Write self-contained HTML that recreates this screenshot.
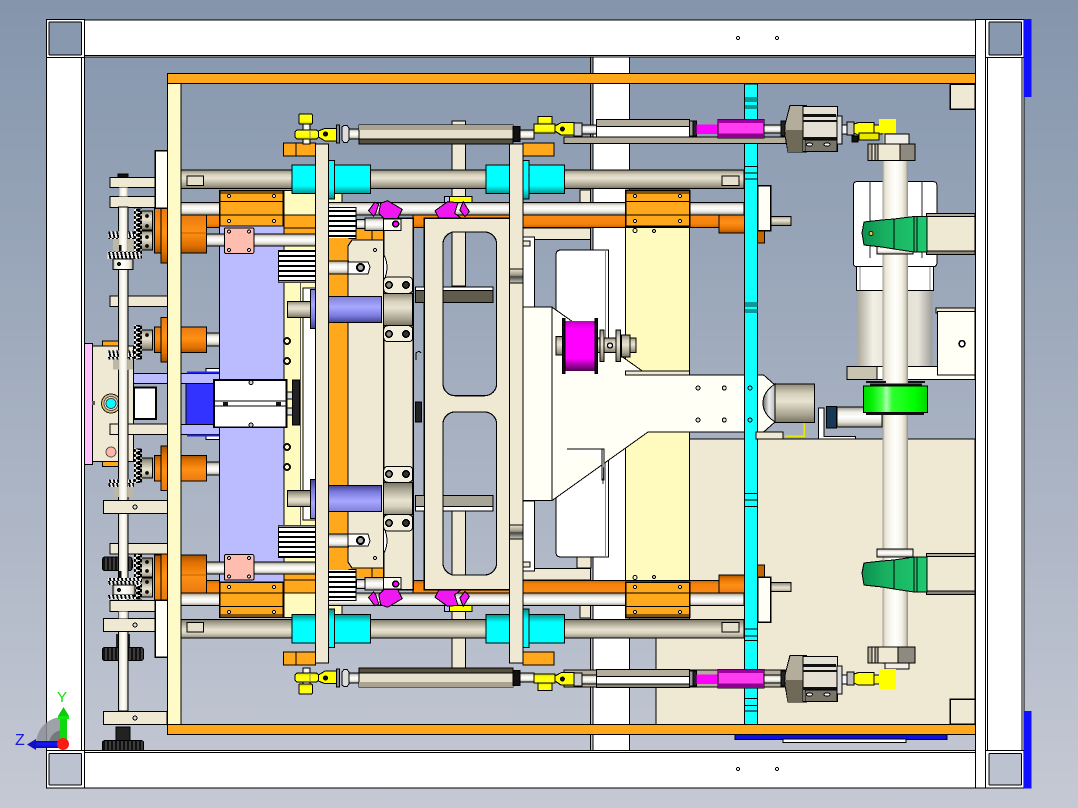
<!DOCTYPE html>
<html><head><meta charset="utf-8"><style>html,body{margin:0;padding:0;width:1078px;height:808px;overflow:hidden}svg{display:block}</style></head><body>
<svg xmlns="http://www.w3.org/2000/svg" width="1078" height="808" viewBox="0 0 1078 808" stroke="#000" stroke-width="1" shape-rendering="crispEdges">
<defs>
<linearGradient id="bg" x1="0" y1="0" x2="0" y2="1"><stop offset="0" stop-color="#8495ac"/><stop offset="1" stop-color="#c5c9d4"/></linearGradient>
<linearGradient id="tan" x1="0" y1="0" x2="0" y2="1"><stop offset="0" stop-color="#8f8a78"/><stop offset=".25" stop-color="#d6d0bd"/><stop offset=".45" stop-color="#e8e2d0"/><stop offset=".8" stop-color="#a8a290"/><stop offset="1" stop-color="#77725f"/></linearGradient>
<linearGradient id="wr" x1="0" y1="0" x2="0" y2="1"><stop offset="0" stop-color="#99968c"/><stop offset=".25" stop-color="#f0eee6"/><stop offset=".5" stop-color="#fff"/><stop offset=".75" stop-color="#e6e3d8"/><stop offset="1" stop-color="#8e8b80"/></linearGradient>
<linearGradient id="vr" x1="0" y1="0" x2="1" y2="0"><stop offset="0" stop-color="#9a958a"/><stop offset=".1" stop-color="#e6e3d6"/><stop offset=".3" stop-color="#f8f6ec"/><stop offset=".5" stop-color="#fffffc"/><stop offset=".75" stop-color="#f4f1e6"/><stop offset=".9" stop-color="#d6d2c4"/><stop offset="1" stop-color="#8f8a7c"/></linearGradient>
<linearGradient id="mot" x1="0" y1="0" x2="1" y2="0"><stop offset="0" stop-color="#aeaa9c"/><stop offset=".2" stop-color="#f2f0e6"/><stop offset=".5" stop-color="#dedbcf"/><stop offset=".8" stop-color="#e8e6dc"/><stop offset="1" stop-color="#9c9c98"/></linearGradient>
<linearGradient id="cy" x1="0" y1="0" x2="0" y2="1"><stop offset="0" stop-color="#0ff"/><stop offset=".72" stop-color="#0ff"/><stop offset="1" stop-color="#0a8f8c"/></linearGradient>
<linearGradient id="or" x1="0" y1="0" x2="0" y2="1"><stop offset="0" stop-color="#e87a10"/><stop offset=".45" stop-color="#ff9015"/><stop offset=".8" stop-color="#e07000"/><stop offset="1" stop-color="#a35200"/></linearGradient>
<linearGradient id="ro" x1="0" y1="0" x2="0" y2="1"><stop offset="0" stop-color="#f98a12"/><stop offset=".7" stop-color="#f5820c"/><stop offset="1" stop-color="#c56500"/></linearGradient>
<linearGradient id="pu" x1="0" y1="0" x2="0" y2="1"><stop offset="0" stop-color="#8080d8"/><stop offset=".4" stop-color="#a8a8ff"/><stop offset=".75" stop-color="#7b7be0"/><stop offset="1" stop-color="#44448f"/></linearGradient>
<linearGradient id="mg" x1="0" y1="0" x2="0" y2="1"><stop offset="0" stop-color="#c000c0"/><stop offset=".15" stop-color="#f0f"/><stop offset=".75" stop-color="#f0f"/><stop offset="1" stop-color="#500050"/></linearGradient>
<linearGradient id="gr" x1="0" y1="0" x2="1" y2="0"><stop offset="0" stop-color="#00d800"/><stop offset=".12" stop-color="#00f000"/><stop offset=".3" stop-color="#50ff50"/><stop offset=".36" stop-color="#b0ffb0"/><stop offset=".45" stop-color="#30ff30"/><stop offset=".8" stop-color="#00ff00"/><stop offset="1" stop-color="#00d800"/></linearGradient>
<linearGradient id="cone" x1="0" y1="0" x2="1" y2="0"><stop offset="0" stop-color="#0c9050"/><stop offset=".35" stop-color="#17b060"/><stop offset="1" stop-color="#20c870"/></linearGradient>
<linearGradient id="bl" x1="0" y1="0" x2="0" y2="1"><stop offset="0" stop-color="#0a0aa0"/><stop offset=".4" stop-color="#1818ff"/><stop offset="1" stop-color="#0808b0"/></linearGradient>
<linearGradient id="dome" x1="0" y1="0" x2="1" y2="0"><stop offset="0" stop-color="#666"/><stop offset=".5" stop-color="#eee"/><stop offset="1" stop-color="#bbb"/></linearGradient>
<linearGradient id="band" x1="0" y1="0" x2="0" y2="1"><stop offset="0" stop-color="#efe8d2"/><stop offset=".45" stop-color="#9a9582"/><stop offset=".55" stop-color="#444"/><stop offset="1" stop-color="#d4cdb8"/></linearGradient>
<linearGradient id="ylw" x1="0" y1="0" x2="0" y2="1"><stop offset="0" stop-color="#ffff20"/><stop offset=".7" stop-color="#ff0"/><stop offset="1" stop-color="#c8c800"/></linearGradient>
<pattern id="stripe" width="4" height="5" patternUnits="userSpaceOnUse"><rect width="4" height="5" fill="#fff" stroke="none"/><rect y="0" width="4" height="2" fill="#000" stroke="none"/></pattern>
<pattern id="gear" width="8" height="5" patternUnits="userSpaceOnUse"><rect width="8" height="5" fill="#eee" stroke="none"/><path d="M0 0L8 2.5L0 5" stroke="#000" stroke-width="2" fill="none"/></pattern>
<pattern id="gv" width="4" height="7" patternUnits="userSpaceOnUse"><rect width="4" height="7" fill="#eee" stroke="none"/><path d="M1 0L2.5 7" stroke="#000" stroke-width="1.8" fill="none"/></pattern>
<pattern id="kn" width="4" height="5" patternUnits="userSpaceOnUse"><rect width="4" height="5" fill="#111" stroke="none"/><path d="M2 0V5" stroke="#666" stroke-width="1" fill="none"/></pattern>

<g id="M0">
<rect x="580" y="190" width="10.7" height="13" fill="#efe8d2"/>
<rect x="181" y="170" width="563" height="18.7" fill="url(#tan)"/>
<rect x="187" y="176" width="16.5" height="9.7" fill="#e5dfcb"/>
<rect x="722" y="176" width="17" height="9.7" fill="#e5dfcb"/>
<rect x="444.4" y="196.7" width="5" height="7" fill="#bbf"/>
<rect x="449.4" y="196.7" width="22.4" height="6" fill="#ff0"/>
<rect x="413" y="215" width="306" height="12.7" fill="url(#ro)"/>
<rect x="206.6" y="215" width="13" height="12.7" fill="url(#ro)"/>
<rect x="181" y="202.3" width="563" height="12.7" fill="url(#wr)"/>
<rect x="719" y="215" width="25.6" height="18" fill="url(#or)"/>
<rect x="757.7" y="230.7" width="7" height="12.3" fill="#c66500"/>
<rect x="757.7" y="185.7" width="12.8" height="45" fill="#fffff5" stroke-width="1.5"/>
<rect x="771" y="216.3" width="19.8" height="9.4" fill="url(#tan)"/>
<rect x="219.7" y="190.7" width="63.3" height="35.3" fill="#ffa81c" stroke-width="1.5"/>
<path d="M219.7 201.7H283M219.7 215H283M219.7 193H283" fill="none"/>
<circle cx="229" cy="196" r="1.6" fill="#ddd"/><circle cx="274" cy="196" r="1.6" fill="#ddd"/>
<circle cx="229" cy="221" r="1.6" fill="#ddd"/><circle cx="274" cy="221" r="1.6" fill="#ddd"/>
<rect x="625.5" y="190.7" width="64" height="35.3" fill="#ffa81c" stroke-width="1.5"/>
<path d="M625.5 201.7H689.5M625.5 215H689.5M625.5 193H689.5" fill="none"/>
<circle cx="635" cy="196" r="1.6" fill="#ddd"/><circle cx="680" cy="196" r="1.6" fill="#ddd"/>
<circle cx="635" cy="221" r="1.6" fill="#ddd"/><circle cx="680" cy="221" r="1.6" fill="#ddd"/>
<circle cx="635" cy="230.5" r="2" fill="#fffbbe"/><circle cx="654" cy="231" r="1.4" fill="#fffbbe"/>
<rect x="181" y="215" width="25.6" height="38" fill="url(#or)"/>
<path d="M181 233H206.6" stroke="#c06000" fill="none"/>
<rect x="154.3" y="208" width="7" height="45" fill="url(#or)"/>
<rect x="161" y="208" width="7" height="55" fill="url(#or)"/>
<rect x="155" y="150.7" width="12.7" height="57.3" fill="#fffff5" stroke-width="1.5"/>
<rect x="110" y="177.7" width="45" height="10" fill="#efe8d2"/>
<rect x="110" y="196.7" width="45" height="10.6" fill="#efe8d2"/>
<rect x="141" y="211" width="11.6" height="19" fill="url(#tan)"/>
<rect x="141" y="231" width="11.6" height="19" fill="url(#tan)"/>
<circle cx="147" cy="216" r="1.3" fill="#222"/><circle cx="147" cy="226" r="1.3" fill="#222"/><circle cx="147" cy="237" r="1.3" fill="#222"/><circle cx="147" cy="246" r="1.3" fill="#222"/>
<rect x="134" y="208.3" width="8" height="50" fill="url(#gear)" stroke="none"/>
<rect x="206.6" y="333" width="13" height="13" fill="url(#wr)"/>
<rect x="181" y="327" width="25.6" height="25.7" fill="url(#or)"/>
<rect x="154.3" y="327" width="7" height="25.7" fill="url(#or)"/>
<rect x="161" y="317.3" width="7" height="44.7" fill="url(#or)"/>
<rect x="141" y="330" width="11.6" height="20" fill="url(#tan)"/>
<circle cx="147" cy="335" r="1.3" fill="#222"/>
<rect x="134" y="325" width="8" height="34.3" fill="url(#gear)" stroke="none"/>
<rect x="110" y="296" width="58" height="10.7" fill="#efe8d2"/>
<rect x="132" y="373.3" width="88" height="10" fill="#bbf"/>
<rect x="206" y="368.7" width="14" height="4.6" fill="#fff"/>
<rect x="187" y="371.7" width="33" height="2" fill="#2222ee" stroke="none"/>
</g>

<g id="M1">
<rect x="206.6" y="234" width="108.9" height="12" fill="url(#wr)"/>
<rect x="224.5" y="228" width="29.3" height="25.3" fill="#ffbdb0" rx="1"/>
<circle cx="229" cy="231.5" r="1.5" fill="#ddd"/><circle cx="249" cy="231.5" r="1.5" fill="#ddd"/><circle cx="229" cy="250" r="1.5" fill="#ddd"/><circle cx="249" cy="250" r="1.5" fill="#ddd"/>
<rect x="278.3" y="250.7" width="37.2" height="32" fill="url(#stripe)"/>
<rect x="278.3" y="281" width="37.2" height="1.7" fill="#888" stroke="none"/>
<rect x="283.8" y="215" width="31.7" height="19" fill="#ffa81c"/>
<path d="M283.8 228H315.5" fill="none"/>
<circle cx="287" cy="341" r="3" fill="#fffbbe" stroke="#111" stroke-width="2"/>
<circle cx="287" cy="361" r="3" fill="#fffbbe" stroke="#111" stroke-width="2"/>
<rect x="348" y="230" width="35" height="12" fill="#ffa81c" stroke="none"/>
<path d="M356 238V230M372 240V230" fill="none"/>
<rect x="328.5" y="207.3" width="27.3" height="31" fill="url(#stripe)"/>
</g>

<g id="M2">
<circle cx="375" cy="250" r="1.6" fill="#ccc"/>
<path d="M384 255Q390 267 384 280" fill="#fff"/>
<rect x="328.5" y="261" width="20" height="13" fill="url(#wr)"/>
<path d="M348 262H368L370 267L368 274H348Z" fill="#fff"/>
<circle cx="360.5" cy="267.5" r="3.5" fill="#aaa" stroke-width="2"/>
<rect x="356.5" y="219.5" width="9" height="9" fill="url(#wr)"/>
<rect x="365" y="218" width="19" height="12.7" fill="url(#wr)"/>
<rect x="383.7" y="219" width="17.5" height="11.5" fill="#fffff5"/>
<circle cx="395.7" cy="224" r="3" fill="#f0f" stroke-width="1.5"/>
<rect x="287.6" y="301.7" width="23.1" height="15.6" fill="url(#tan)"/>
<rect x="310.7" y="289.3" width="5" height="39" fill="url(#pu)"/>
<rect x="328.5" y="296.7" width="53" height="25.6" fill="url(#pu)"/>
<rect x="383.7" y="293.3" width="29" height="32.4" fill="url(#tan)"/>
<rect x="383.7" y="277" width="29" height="16.3" rx="4" fill="#f4eedd"/>
<rect x="383.7" y="325.7" width="29" height="16" rx="4" fill="#f4eedd"/>
<circle cx="389" cy="285" r="3.2" fill="#888" stroke-width="1.6"/><circle cx="406" cy="285" r="3.2" fill="#333" stroke-width="1.6"/>
<circle cx="389" cy="334" r="3.2" fill="#888" stroke-width="1.6"/><circle cx="406" cy="334" r="3.2" fill="#333" stroke-width="1.6"/>
<rect x="292" y="165" width="78.6" height="28.7" fill="url(#cy)"/>
<rect x="328" y="160.7" width="6.7" height="38.3" fill="url(#cy)"/>
<rect x="486" y="165" width="78.5" height="28.7" fill="url(#cy)"/>
<rect x="522" y="160.7" width="7" height="38.3" fill="url(#cy)"/>
<polygon points="368.5,210.7 374.8,202.3 378.8,204 375.6,213.3 373.7,216" fill="#f018f0"/>
<polygon points="380.6,203.3 387.5,200.7 402.2,209.3 397.8,218.3 384,218.3 378.8,213.3" fill="#f018f0"/>
<polygon points="435,210.7 447.7,201.7 458,202.7 454.6,213.3 461.5,218.3 439,218.3" fill="#f018f0"/>
<polygon points="463.2,201.7 469.4,211.7 465,216.7 459.8,210" fill="#f018f0"/>
<rect x="522.7" y="228" width="68" height="11.3" fill="#efe8d2"/>
<rect x="522.7" y="237" width="12" height="70" fill="#fff"/>
<path d="M523 241H530V246H523" fill="#efe8d2"/>
<rect x="283.4" y="143" width="12.6" height="13" fill="#ffa81c"/>
<rect x="296" y="143" width="19.5" height="13" fill="#ffa81c"/>
<rect x="522.8" y="143" width="31" height="13" fill="#ffa81c"/>
</g>

<g id="LBall">
<rect x="303" y="124" width="7" height="6" fill="url(#vr)"/>
<rect x="299" y="114" width="13.3" height="10" fill="url(#ylw)" rx="1"/>
</g>
<g id="L">
<rect x="303" y="139" width="7" height="5" fill="url(#vr)"/>
<rect x="295" y="130" width="23.5" height="9" rx="3" fill="url(#ylw)"/>
<path d="M310 130V139" fill="none" stroke="#888"/>
<path d="M318.5 131L325 128.3H336.7V141H325L318.5 137Z" fill="#ff0"/>
<circle cx="325.5" cy="134" r="2" fill="#111"/>
<rect x="336.7" y="125" width="3" height="18" fill="#888"/>
<path d="M342 127L344 125.5H347L349 128V140L347 142.5H344L342 140Z" fill="#ddd"/>
<rect x="349" y="129" width="10" height="10" fill="url(#wr)"/>
<rect x="359" y="125" width="154" height="19" fill="#e6dfcb"/>
<rect x="359" y="125" width="154" height="5" fill="#aba391" stroke="none"/>
<rect x="359" y="139" width="154" height="5" fill="#55503f"/>
<rect x="513" y="126.7" width="7" height="15" fill="#111"/>
<rect x="520" y="130" width="14" height="9" fill="url(#wr)"/>
</g>
<g id="Y2">
<rect x="538" y="116.7" width="14" height="7.5" fill="url(#ylw)"/>
<rect x="534" y="124" width="21" height="9" fill="url(#ylw)"/>
</g>
<g id="LB">
<path d="M555 126L561 122.7H574V135H561L555 131Z" fill="#ff0"/>
<circle cx="562.4" cy="129" r="2" fill="#111"/>
<rect x="574" y="123" width="8" height="13" fill="#ccc"/>
<rect x="582" y="125" width="14.5" height="9" fill="url(#wr)"/>
<rect x="596.5" y="119.3" width="93" height="17.7" fill="#fff"/>
<rect x="596.5" y="119.3" width="93" height="7" fill="#b5ad9c"/>
<rect x="689.5" y="121" width="3.5" height="15" fill="#999"/>
<rect x="693" y="121" width="3.4" height="15" fill="#222"/>
<rect x="696.4" y="124.3" width="21.6" height="9.7" fill="#f0f" stroke="none"/>
<rect x="764" y="125" width="21" height="8" fill="url(#wr)"/>
<rect x="781" y="121" width="5" height="15" fill="#222"/>
<rect x="717.8" y="119.3" width="46.2" height="18.7" fill="#ff3cf0"/>
<rect x="717.8" y="119.3" width="46.2" height="3.7" fill="#a000a0" stroke="none"/>
<rect x="717.8" y="133.5" width="46.2" height="4.5" fill="#900090" stroke="none"/>
<polygon points="790,105.3 806.5,105.3 806.5,152 788,152 785,135 785,125" fill="#b5ad9c"/>
<polygon points="785,130 806.5,130 806.5,152 788,152" fill="#6f6a58" stroke="none"/>
<rect x="803" y="106.7" width="34.6" height="45" fill="#e4e1d4"/>
<rect x="803" y="114" width="33" height="3" fill="#111" stroke="none"/>
<rect x="803" y="120" width="34" height="2" fill="#111" stroke="none"/>
<rect x="803" y="137" width="34" height="3" fill="#111" stroke="none"/>
<rect x="805" y="140" width="32" height="11.5" fill="#787468"/>
<ellipse cx="809.5" cy="144.5" rx="3" ry="1.6" fill="#fff"/>
<ellipse cx="827" cy="144.5" rx="3" ry="1.6" fill="#fff"/>
<rect x="837" y="116" width="5" height="28" fill="#ddd"/>
<rect x="842" y="125" width="12" height="9" fill="#f4f4ff"/>
<rect x="847" y="122" width="7" height="13" fill="#bbb"/>
<path d="M854 124L858 122.7H874V135H858L854 133Z" fill="#ff0"/>
<rect x="874" y="125" width="8" height="9" fill="#ff0"/>
<rect x="879" y="119" width="17" height="14" fill="#ff0" stroke="none"/>
</g>
</defs>

<rect x="0" y="0" width="1078" height="808" fill="url(#bg)" stroke="none"/>
<rect x="593" y="57" width="36.6" height="694" fill="#fff"/>
<path d="M590.7 57V751" fill="none"/>
<path d="M689.5 439H975V725H655.8V637H689.5Z" fill="#efe8d2"/>
<rect x="625.5" y="190" width="64" height="428" fill="#fffbbe"/>
<path d="M561 250H608.6V557H561Q556 557 556 552V255Q556 250 561 250Z" fill="#fff"/>
<path d="M605.5 250V557" fill="none" stroke="#888"/>
<rect x="577" y="557" width="14" height="11" fill="#efe8d2"/>
<rect x="950" y="84" width="25" height="25" fill="#efe8d2" stroke-width="1.5"/>
<rect x="950" y="699" width="25" height="25" fill="#efe8d2" stroke-width="1.5"/>
<rect x="452" y="121" width="13.6" height="81" fill="#efe8d2"/>
<rect x="452" y="606" width="13.6" height="62" fill="#efe8d2"/>

<use href="#M0"/>
<use href="#M0" transform="translate(0,808) scale(1,-1)"/>
<rect x="186" y="383.3" width="28" height="41.4" fill="#3333ff"/>
<rect x="283.8" y="190.7" width="31.7" height="426.6" fill="#fffbbe"/>
<rect x="328" y="190.7" width="14" height="12" fill="#fffbbe"/>
<rect x="328" y="605.3" width="14" height="12" fill="#fffbbe"/>
<rect x="303" y="288" width="12.5" height="232" fill="#fff"/>
<path d="M300.5 283V525" fill="none" stroke="#555"/>
<rect x="219.7" y="226" width="64.1" height="356" fill="#bbf"/>
<use href="#M1"/>
<use href="#M1" transform="translate(0,808) scale(1,-1)"/>
<rect x="328.5" y="238" width="20" height="332" fill="#ffa81c" stroke="none"/>
<path d="M348 246L352 240H383.7V568H352L348 562Z" fill="#efe8d2"/>
<rect x="383.7" y="218.3" width="29.6" height="371.4" fill="#efe8d2" stroke-width="1.4"/>
<use href="#M2"/>
<use href="#M2" transform="translate(0,808) scale(1,-1)"/>
<rect x="315.5" y="144" width="13" height="519" fill="#efe8d2"/>
<rect x="509.4" y="144" width="13.4" height="519" fill="#efe8d2"/>
<rect x="509.4" y="269" width="13.4" height="14" fill="url(#band)"/>
<rect x="509.4" y="525" width="13.4" height="14" fill="url(#band)"/>

<path fill-rule="evenodd" d="M424.3 218.3H509.4V589.7H424.3ZM455 232H484.6A12 12 0 0 1 496.6 244V383.7A12 12 0 0 1 484.6 395.7H455A12 12 0 0 1 443 383.7V244A12 12 0 0 1 455 232ZM455 412H484.6A12 12 0 0 1 496.6 424V563A12 12 0 0 1 484.6 575H455A12 12 0 0 1 443 563V424A12 12 0 0 1 455 412Z" fill="#efe8d2" stroke-width="1.2"/>
<rect x="452" y="232" width="13.6" height="54" fill="#efe8d2"/>
<rect x="452" y="511" width="13.6" height="64" fill="#efe8d2"/>
<rect x="443" y="287" width="50" height="3.5" fill="#fff"/>
<rect x="443" y="290.5" width="50" height="12.2" fill="#5f5c4e"/>
<rect x="415.7" y="287" width="8.6" height="3.5" fill="#fff"/>
<rect x="415.7" y="290.5" width="8.6" height="12.2" fill="#5f5c4e"/>
<rect x="443" y="495.5" width="50" height="11" fill="#a8a496"/>
<rect x="443" y="506.5" width="50" height="4.5" fill="#fff"/>
<rect x="415.7" y="495.5" width="8.6" height="11" fill="#a8a496"/>
<rect x="415.7" y="506.5" width="8.6" height="4.5" fill="#fff"/>
<rect x="415.5" y="402" width="6" height="20" fill="#222"/>
<path d="M416 360V353Q419 350 421 353" fill="none"/>

<path d="M523 307H551.8L648 375H763.6L775 385V422L763.6 432H648L551.8 500.7H523Z" fill="#fffff5"/>
<path d="M551.8 307V500.7" fill="none"/>
<rect x="625.5" y="371" width="64" height="4" fill="#efe8d2"/>
<path d="M567 449H602V460M602 449H604V480H602V460" fill="#fff"/>
<path d="M604 462L603 484" fill="none" stroke="#222"/>
<g fill="#ddd">
<circle cx="698" cy="388" r="2"/><circle cx="724.3" cy="388" r="2"/>
<circle cx="698" cy="420" r="2"/><circle cx="724.3" cy="420" r="2"/>
</g>
<rect x="556" y="336.7" width="7" height="18.3" fill="url(#tan)"/>
<rect x="564" y="321" width="32" height="50" fill="url(#mg)" stroke="none"/>
<rect x="562.5" y="318.3" width="2.6" height="55" fill="#111"/>
<rect x="595" y="318.3" width="2.6" height="55" fill="#111"/>
<rect x="597.6" y="338" width="38.4" height="14.7" fill="url(#tan)"/>
<rect x="600" y="330" width="4" height="31.7" fill="url(#tan)"/>
<rect x="616" y="330" width="4.6" height="31.7" fill="url(#tan)"/>
<rect x="621.7" y="335" width="8.3" height="22" fill="url(#tan)"/>
<circle cx="610" cy="345.5" r="2.5" fill="#eee" stroke-width="1.4"/>
<rect x="744.6" y="84" width="13.1" height="641" fill="#10ffff"/>
<g stroke="#000" fill="none">
<path d="M744.6 166.7H757.7M744.6 173H757.7M744.6 179H757.7M744.6 493.3H757.7M744.6 500H757.7M744.6 506.3H757.7M744.6 698.3H757.7M744.6 705.7H757.7M744.6 711H757.7M744.6 629H757.7M744.6 636H757.7M744.6 640.7H757.7"/>
</g>
<rect x="745" y="97" width="12.3" height="5" fill="#0a9a9a" stroke="none"/>
<rect x="745" y="105" width="12.3" height="4" fill="#0a9a9a" stroke="none"/>
<rect x="745" y="302" width="12.3" height="5" fill="#0a9a9a" stroke="none"/>
<rect x="745" y="309" width="12.3" height="4" fill="#0a9a9a" stroke="none"/>
<circle cx="750" cy="388" r="2" fill="#0ff"/><circle cx="750" cy="420" r="2" fill="#0ff"/>

<path d="M775 384Q763 392 763 403Q763 414 775 422Z" fill="url(#dome)"/>
<rect x="775" y="384" width="39.3" height="38.7" fill="url(#tan)"/>
<path d="M804 423V436H785" fill="none" stroke="#e8e800" stroke-width="1.5"/>
<rect x="756" y="432" width="27" height="7" fill="#efe8d2"/>
<path d="M818.5 408H824V436.5H855.5V439H818.5Z" fill="#fff"/>
<rect x="837" y="407" width="45" height="20" fill="url(#wr)"/>
<rect x="826.7" y="406.7" width="10" height="21.3" fill="#183858"/>

<rect x="853.5" y="181.7" width="83.3" height="85" rx="3" fill="#fff"/>
<path d="M870 182V258M922 182V258" fill="none" stroke="#222"/>
<rect x="856.6" y="266.7" width="76.7" height="24" fill="#fff"/>
<path d="M860 267V290M930 267V290" fill="none" stroke="#888"/>
<rect x="858" y="290.7" width="74.7" height="76" fill="url(#mot)" stroke="none"/>
<path d="M856.6 290.7H933.3" fill="none"/>
<rect x="847" y="366.7" width="128" height="12.6" fill="#fffff5"/>
<rect x="847" y="366.7" width="30" height="12.6" fill="#c8c4b0"/>
<rect x="936" y="308" width="39" height="5" fill="#efe8d2"/>
<rect x="937.5" y="311.7" width="37.5" height="63.3" fill="#fffff5"/>
<circle cx="962" cy="343.7" r="3" fill="#fff" stroke-width="1.6"/>
<rect x="882.4" y="134" width="25.6" height="530" fill="url(#vr)" stroke="none"/>
<rect x="885" y="134" width="24" height="11" fill="#f0eee6"/>
<rect x="868" y="144" width="47" height="16.7" fill="#efe8d2"/>
<rect x="868" y="144" width="4" height="16.7" fill="#b5ad9c"/><rect x="875" y="144" width="3" height="16.7" fill="#b5ad9c"/>
<rect x="900" y="144" width="15" height="16.7" fill="#8f8a80"/>
<rect x="868" y="647" width="47" height="16" fill="#efe8d2"/>
<rect x="868" y="647" width="4" height="16" fill="#b5ad9c"/><rect x="875" y="647" width="3" height="16" fill="#b5ad9c"/>
<rect x="898" y="647" width="17" height="16" fill="#8f8a80"/>
<rect x="885" y="663" width="24" height="6" fill="#f0eee6"/>
<rect x="866" y="381" width="20" height="2" fill="#111" stroke="none"/>
<rect x="908" y="381" width="17" height="2" fill="#111" stroke="none"/>
<rect x="870" y="383.5" width="52" height="2.5" fill="#111" stroke="none"/>
<rect x="863.3" y="386" width="64" height="26.7" fill="url(#gr)"/>
<rect x="866" y="413" width="58" height="2" fill="#111" stroke="none"/>
<rect x="877" y="549" width="36" height="8" fill="url(#wr)"/>
<rect x="877" y="246" width="36" height="8" fill="url(#wr)"/>
<rect x="926.5" y="213.3" width="48.5" height="41" fill="#efe8d2"/>
<rect x="926.5" y="213.3" width="48.5" height="3" fill="#b5ad9c"/><rect x="926.5" y="251" width="48.5" height="3.3" fill="#8a8678"/>
<rect x="926.5" y="553.3" width="48.5" height="41.4" fill="#efe8d2"/>
<rect x="926.5" y="553.3" width="48.5" height="3" fill="#b5ad9c"/><rect x="926.5" y="591" width="48.5" height="3.7" fill="#8a8678"/>
<polygon points="864,222 882,220 894,219 914,216.5 927,216.5 927,252 914,252 894,249 882,247 864,245 862,233" fill="url(#cone)"/>
<path d="M894 219V249M914 216.5V252M917 216.5V252" fill="none"/>
<circle cx="871" cy="233.5" r="2" fill="#e8c040" stroke="#111"/>
<polygon points="864,563 882,561 894,560 914,557 927,557 927,592 914,592 894,589 882,587 864,585 862,573" fill="url(#cone)"/>
<path d="M894 560V589M914 557V592M917 557V592" fill="none"/>

<!-- linkage bars behind -->
<rect x="564" y="137" width="222" height="6.3" fill="#b5ad9c"/>
<rect x="564" y="670" width="222" height="17" fill="#b5ad9c"/>
<use href="#LBall"/>
<use href="#LBall" transform="translate(0,808) scale(1,-1)"/>
<use href="#L"/>
<use href="#L" transform="translate(0,812) scale(1,-1)"/>
<use href="#Y2"/>
<use href="#Y2" transform="translate(0,807) scale(1,-1)"/>
<use href="#LB"/>
<use href="#LB" transform="translate(0,550)"/>
<rect x="596.5" y="684" width="93" height="3.5" fill="#8a8678"/>
<rect x="879" y="683" width="17" height="6" fill="#ff0" stroke="none"/>
<rect x="859" y="133" width="20" height="7" fill="#e8e800"/>
<rect x="852" y="136" width="6" height="6" fill="#111"/>

<!-- left assembly -->
<rect x="84.7" y="343.3" width="7.6" height="121.4" fill="#ffc0ff"/>
<rect x="102.6" y="341" width="16.4" height="5" fill="#ffa81c"/>
<rect x="102.6" y="461.3" width="16.4" height="5" fill="#ffa81c"/>
<rect x="92.3" y="346" width="41.3" height="115.3" fill="#efe8d2"/>
<circle cx="111" cy="403.5" r="9.5" fill="#e8c060" stroke="#222"/>
<circle cx="111" cy="403.5" r="7" fill="#ddd" stroke="#555"/>
<circle cx="111" cy="403.5" r="5" fill="#0ff" stroke="#444"/>
<circle cx="111" cy="452" r="5" fill="#ffb5a8" stroke="#555"/>
<rect x="92" y="401" width="3" height="4" fill="#555" stroke="none"/>
<rect x="110" y="424" width="58" height="10.7" fill="#efe8d2"/>
<rect x="134" y="387.7" width="22" height="31.3" fill="#fff" stroke-width="2"/>
<rect x="102.3" y="557" width="30" height="13.7" rx="3" fill="url(#kn)"/>
<rect x="110" y="543.3" width="57.7" height="10.7" fill="#efe8d2"/>
<rect x="116" y="634" width="14" height="13" fill="#222" stroke="none"/>
<rect x="102.3" y="647.3" width="41.3" height="13.4" rx="3" fill="url(#kn)"/>
<rect x="116" y="727" width="14" height="14" fill="#222"/>
<rect x="102.3" y="740.7" width="41.3" height="10" rx="2" fill="url(#kn)"/>
<rect x="118.5" y="207" width="9.5" height="504" fill="url(#vr)"/>
<rect x="118" y="174" width="10" height="3.7" fill="#111"/>
<rect x="119" y="187.7" width="9" height="9" fill="url(#vr)" stroke="none"/>
<rect x="108.5" y="231.7" width="10.5" height="7.3" fill="url(#gv)" stroke="none"/>
<rect x="128" y="231.7" width="6" height="7.3" fill="url(#gv)" stroke="none"/>
<rect x="113" y="239" width="20" height="13" fill="#bdb8a6" stroke="none"/>
<rect x="118.5" y="239" width="9.5" height="13" fill="url(#vr)" stroke="none"/>
<rect x="119" y="245" width="2.5" height="7" fill="#111" stroke="none"/>
<rect x="107.5" y="251.7" width="33" height="7.3" fill="url(#gv)" stroke="none"/>
<rect x="113" y="259" width="20" height="10.3" fill="url(#vr)"/>
<circle cx="119" cy="264" r="1.4" fill="#222"/>
<rect x="108" y="350.7" width="11" height="8.6" fill="url(#gv)" stroke="none"/>
<rect x="128" y="350.7" width="6" height="8.6" fill="url(#gv)" stroke="none"/>
<rect x="113" y="359.3" width="20" height="10" fill="#bdb8a6" stroke="none"/>
<rect x="118.5" y="359" width="9.5" height="11" fill="url(#vr)" stroke="none"/>
<rect x="108.5" y="479.3" width="10.5" height="7.7" fill="url(#gv)" stroke="none"/>
<rect x="128" y="479.3" width="6" height="7.7" fill="url(#gv)" stroke="none"/>
<rect x="113" y="487" width="20" height="10" fill="#bdb8a6" stroke="none"/>
<rect x="118.5" y="487" width="9.5" height="10" fill="url(#vr)" stroke="none"/>
<rect x="119" y="571" width="2.5" height="7" fill="#111" stroke="none"/>
<rect x="108" y="578" width="33" height="7" fill="url(#gv)" stroke="none"/>
<rect x="113" y="585" width="22" height="10" fill="url(#vr)"/>
<circle cx="119" cy="590" r="1.4" fill="#222"/>
<rect x="108" y="595" width="26" height="4" fill="url(#gv)" stroke="none"/>
<rect x="110" y="600.7" width="45" height="11" fill="#efe8d2"/>
<rect x="103.3" y="500.3" width="64" height="13.4" fill="#efe8d2"/>
<circle cx="135" cy="507" r="2" fill="#ddd"/>
<rect x="103.3" y="618.3" width="51.7" height="13.4" fill="#efe8d2"/>
<circle cx="135" cy="625" r="2" fill="#ddd"/>
<rect x="103.3" y="711.3" width="63.7" height="13.4" fill="#efe8d2"/>
<circle cx="135" cy="718" r="2" fill="#ddd"/>
<rect x="118.5" y="611.7" width="9.5" height="6.6" fill="url(#vr)" stroke="none"/>
<rect x="214" y="380" width="72.5" height="47.3" fill="#fff" stroke-width="1.6"/>
<path d="M214 401H286M214 406H286" fill="none"/>
<rect x="223" y="402" width="5" height="4" fill="#111" stroke="none"/><rect x="276" y="402" width="5" height="4" fill="#111" stroke="none"/>
<circle cx="251" cy="382.5" r="2" fill="#ccc"/><circle cx="251" cy="425" r="2" fill="#ccc"/>
<rect x="287" y="392" width="6" height="7" fill="#ddd"/><rect x="287" y="408" width="6" height="7" fill="#ddd"/>
<rect x="292.7" y="380" width="7" height="45" fill="#222"/>

<rect x="84.4" y="20" width="891" height="37" fill="#fff"/>
<path d="M84 55.5H975" fill="none"/>
<rect x="84.4" y="750.7" width="891" height="37.3" fill="#fff"/>
<path d="M84 752.5H975" fill="none"/>
<rect x="46.5" y="57.3" width="37.9" height="693.4" fill="#fff"/>
<path d="M81.5 57V751" fill="none"/>
<rect x="975.4" y="19.3" width="48.6" height="768.7" fill="#fff"/>
<path d="M985.7 19V788M987.5 57V751M1022 57V751" fill="none"/>
<path d="M985.7 57.3H1024M985.7 750.7H1024" fill="none"/>
<rect x="46.5" y="19.3" width="37.9" height="38" fill="#fff"/>
<rect x="49" y="22" width="32.6" height="33" rx="1" fill="#8899af"/>
<rect x="46.5" y="750.7" width="37.9" height="37.3" fill="#fff"/>
<rect x="49" y="753.5" width="32.6" height="31.5" rx="1" fill="#bcc2cf"/>
<rect x="989" y="22" width="32.5" height="33" rx="1" fill="#8899af"/>
<rect x="989" y="753.5" width="32.5" height="31.5" rx="1" fill="#bcc2cf"/>
<rect x="1024" y="19" width="7.5" height="78" fill="#1010ff" stroke="none"/>
<rect x="1024" y="711" width="7.5" height="77.7" fill="#1010ff" stroke="none"/>
<rect x="167.7" y="83.3" width="13.1" height="641.4" fill="#fffbc8"/>
<rect x="167.7" y="73.3" width="807.7" height="10" fill="#ffa81c"/>
<rect x="167.7" y="724.7" width="807.7" height="9.6" fill="#ffa81c"/>
<rect x="735" y="734.7" width="212" height="4.6" fill="#1010e0"/>
<rect x="783" y="739" width="123" height="3.7" fill="#fff"/>
<g fill="#eee"><circle cx="738" cy="38" r="1.6"/><circle cx="777" cy="38" r="1.6"/><circle cx="738" cy="769" r="1.6"/><circle cx="777" cy="769" r="1.6"/></g>

<g shape-rendering="auto" stroke="none">
<path d="M63 744V717A27 27 0 0 0 36 744Z" fill="#8e9199" opacity=".85"/>
<path d="M63 744V730A14 14 0 0 0 49 744Z" fill="#6e7178" opacity=".85"/>
<rect x="60" y="718" width="7" height="22" fill="#10d810"/>
<polygon points="63.5,707 69,716 58,716" fill="#10c810"/>
<rect x="58" y="716" width="11" height="3" fill="#10e810"/>
<rect x="36" y="741" width="24" height="7" fill="url(#bl)"/>
<polygon points="27,744.5 36,739 36,750" fill="#1010c0"/>
<circle cx="63" cy="744" r="6" fill="#ff1818"/>
<text x="57" y="702" fill="#10e010" font-family="'Liberation Sans',sans-serif" font-size="15">Y</text>
<text x="15" y="745" fill="#1818e0" font-family="'Liberation Sans',sans-serif" font-size="16">Z</text>
</g>
</svg>
</body></html>
